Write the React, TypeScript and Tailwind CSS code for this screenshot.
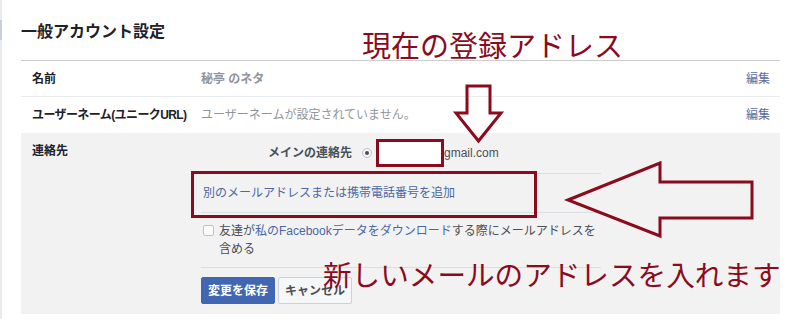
export default function App() {
  return (
    <div className="relative flex w-[800px] h-[319px] overflow-hidden bg-white font-['Liberation_Sans','Noto_Sans_CJK_JP',sans-serif] text-[12px]">
      <div className="w-[2px] h-full bg-[#e9ebee] flex flex-col">
        <div className="mt-[20px] h-[20px] bg-[#c9d0dc]" />
      </div>
      <div className="ml-[19px] w-[759px] flex flex-col">
        <div className="pt-[22px] pb-[18px] border-b border-[#cccccc] text-[16px] leading-[20px] font-bold text-[#1d2129]">
          一般アカウント設定
        </div>
        <div className="h-[36px] flex items-center border-b border-[#e9ebee] pl-[11px] pr-[10px]">
          <div className="w-[169px] font-bold text-[#1d2129]">名前</div>
          <div className="flex-1 text-[#90949c] font-bold">秘亭 のネタ</div>
          <div className="text-[#5b6e9b]">編集</div>
        </div>
        <div className="h-[36px] flex items-center pl-[11px] pr-[10px]">
          <div className="w-[169px] font-bold text-[#1d2129] whitespace-nowrap tracking-[-0.6px]">ユーザーネーム(ユニークURL)</div>
          <div className="flex-1 text-[#90949c]">ユーザーネームが設定されていません。</div>
          <div className="text-[#5b6e9b]">編集</div>
        </div>
        <div className="flex bg-[#f2f2f2] pt-[6px] pb-[10px]">
          <div className="w-[180px] pl-[11px]">
            <div className="mt-[4px] leading-[16px] font-bold text-[#1d2129]">連絡先</div>
          </div>
          <div className="relative w-[400px] flex flex-col">
            <div className="pb-[6px] border-b border-[#dadde1]">
              <div className="h-[28px] flex items-center">
                <div className="w-[151px] text-right font-bold text-[#4b4f56]">メインの連絡先</div>
                <div className="ml-[10px] w-[10px] h-[10px] rounded-full border border-[#bec3c9] bg-[#f5f6f7] flex items-center justify-center">
                  <div className="w-[4px] h-[4px] rounded-full bg-[#4b4f56]" />
                </div>
                <div className="ml-[4px] w-[68px] h-[28px] bg-white border-[3px] border-[#8b0b1d]" />
                <div className="text-[#4b4f56]">gmail.com</div>
              </div>
            </div>
            <div className="h-[39px] flex items-center pl-[2px] border-b border-[#dadde1] text-[#4a67a6]">
              別のメールアドレスまたは携帯電話番号を追加
            </div>
            <div className="flex items-start pt-[9px] pb-[9px] border-b border-[#dadde1]">
              <div className="ml-[2px] mt-[3px] w-[11px] h-[11px] border border-[#bec3c9] rounded-[2px] bg-[#fafafa]" />
              <div className="ml-[5px] leading-[18px] text-[#4b4f56]">
                友達が<span className="text-[#4a67a6]">私のFacebookデータをダウンロード</span>する際にメールアドレスを
                <br />
                含める
              </div>
            </div>
            <div className="mt-[9px] flex gap-[3px]">
              <button className="w-[74px] h-[27px] rounded-[2px] bg-[#4267b2] border border-[#4267b2] text-white font-bold text-[12px]">
                変更を保存
              </button>
              <button className="w-[74px] h-[27px] rounded-[2px] bg-[#f6f7f9] border border-[#ced0d4] text-[#4b4f56] font-bold text-[12px]">
                キャンセル
              </button>
            </div>
            <div className="absolute left-[-10px] top-[32px] w-[346px] h-[47px] border-[3px] border-[#8b0b1d]" />
          </div>
        </div>
      </div>
      <div className="absolute left-[362px] top-[30px] text-[29px] leading-[29px] text-[#8b0b1d] font-['Noto_Sans_CJK_JP',sans-serif] whitespace-nowrap">
        現在の登録アドレス
      </div>
      <div className="absolute left-[323px] top-[259px] text-[28.6px] leading-[29px] text-[#8b0b1d] font-['Noto_Sans_CJK_JP',sans-serif] whitespace-nowrap">
        新しいメールのアドレスを入れます
      </div>
      <svg className="absolute left-0 top-0 pointer-events-none" width="800" height="319" viewBox="0 0 800 319">
        <polygon points="467,86 490,86 490,113 501,113 478.5,141 456,113 467,113" fill="none" stroke="#8b0b1d" strokeWidth="3" strokeLinejoin="miter" />
        <polygon points="568,200 660,163 660,182 752,182 752,218 660,218 660,236" fill="none" stroke="#8b0b1d" strokeWidth="3" strokeLinejoin="miter" />
      </svg>
    </div>
  );
}
